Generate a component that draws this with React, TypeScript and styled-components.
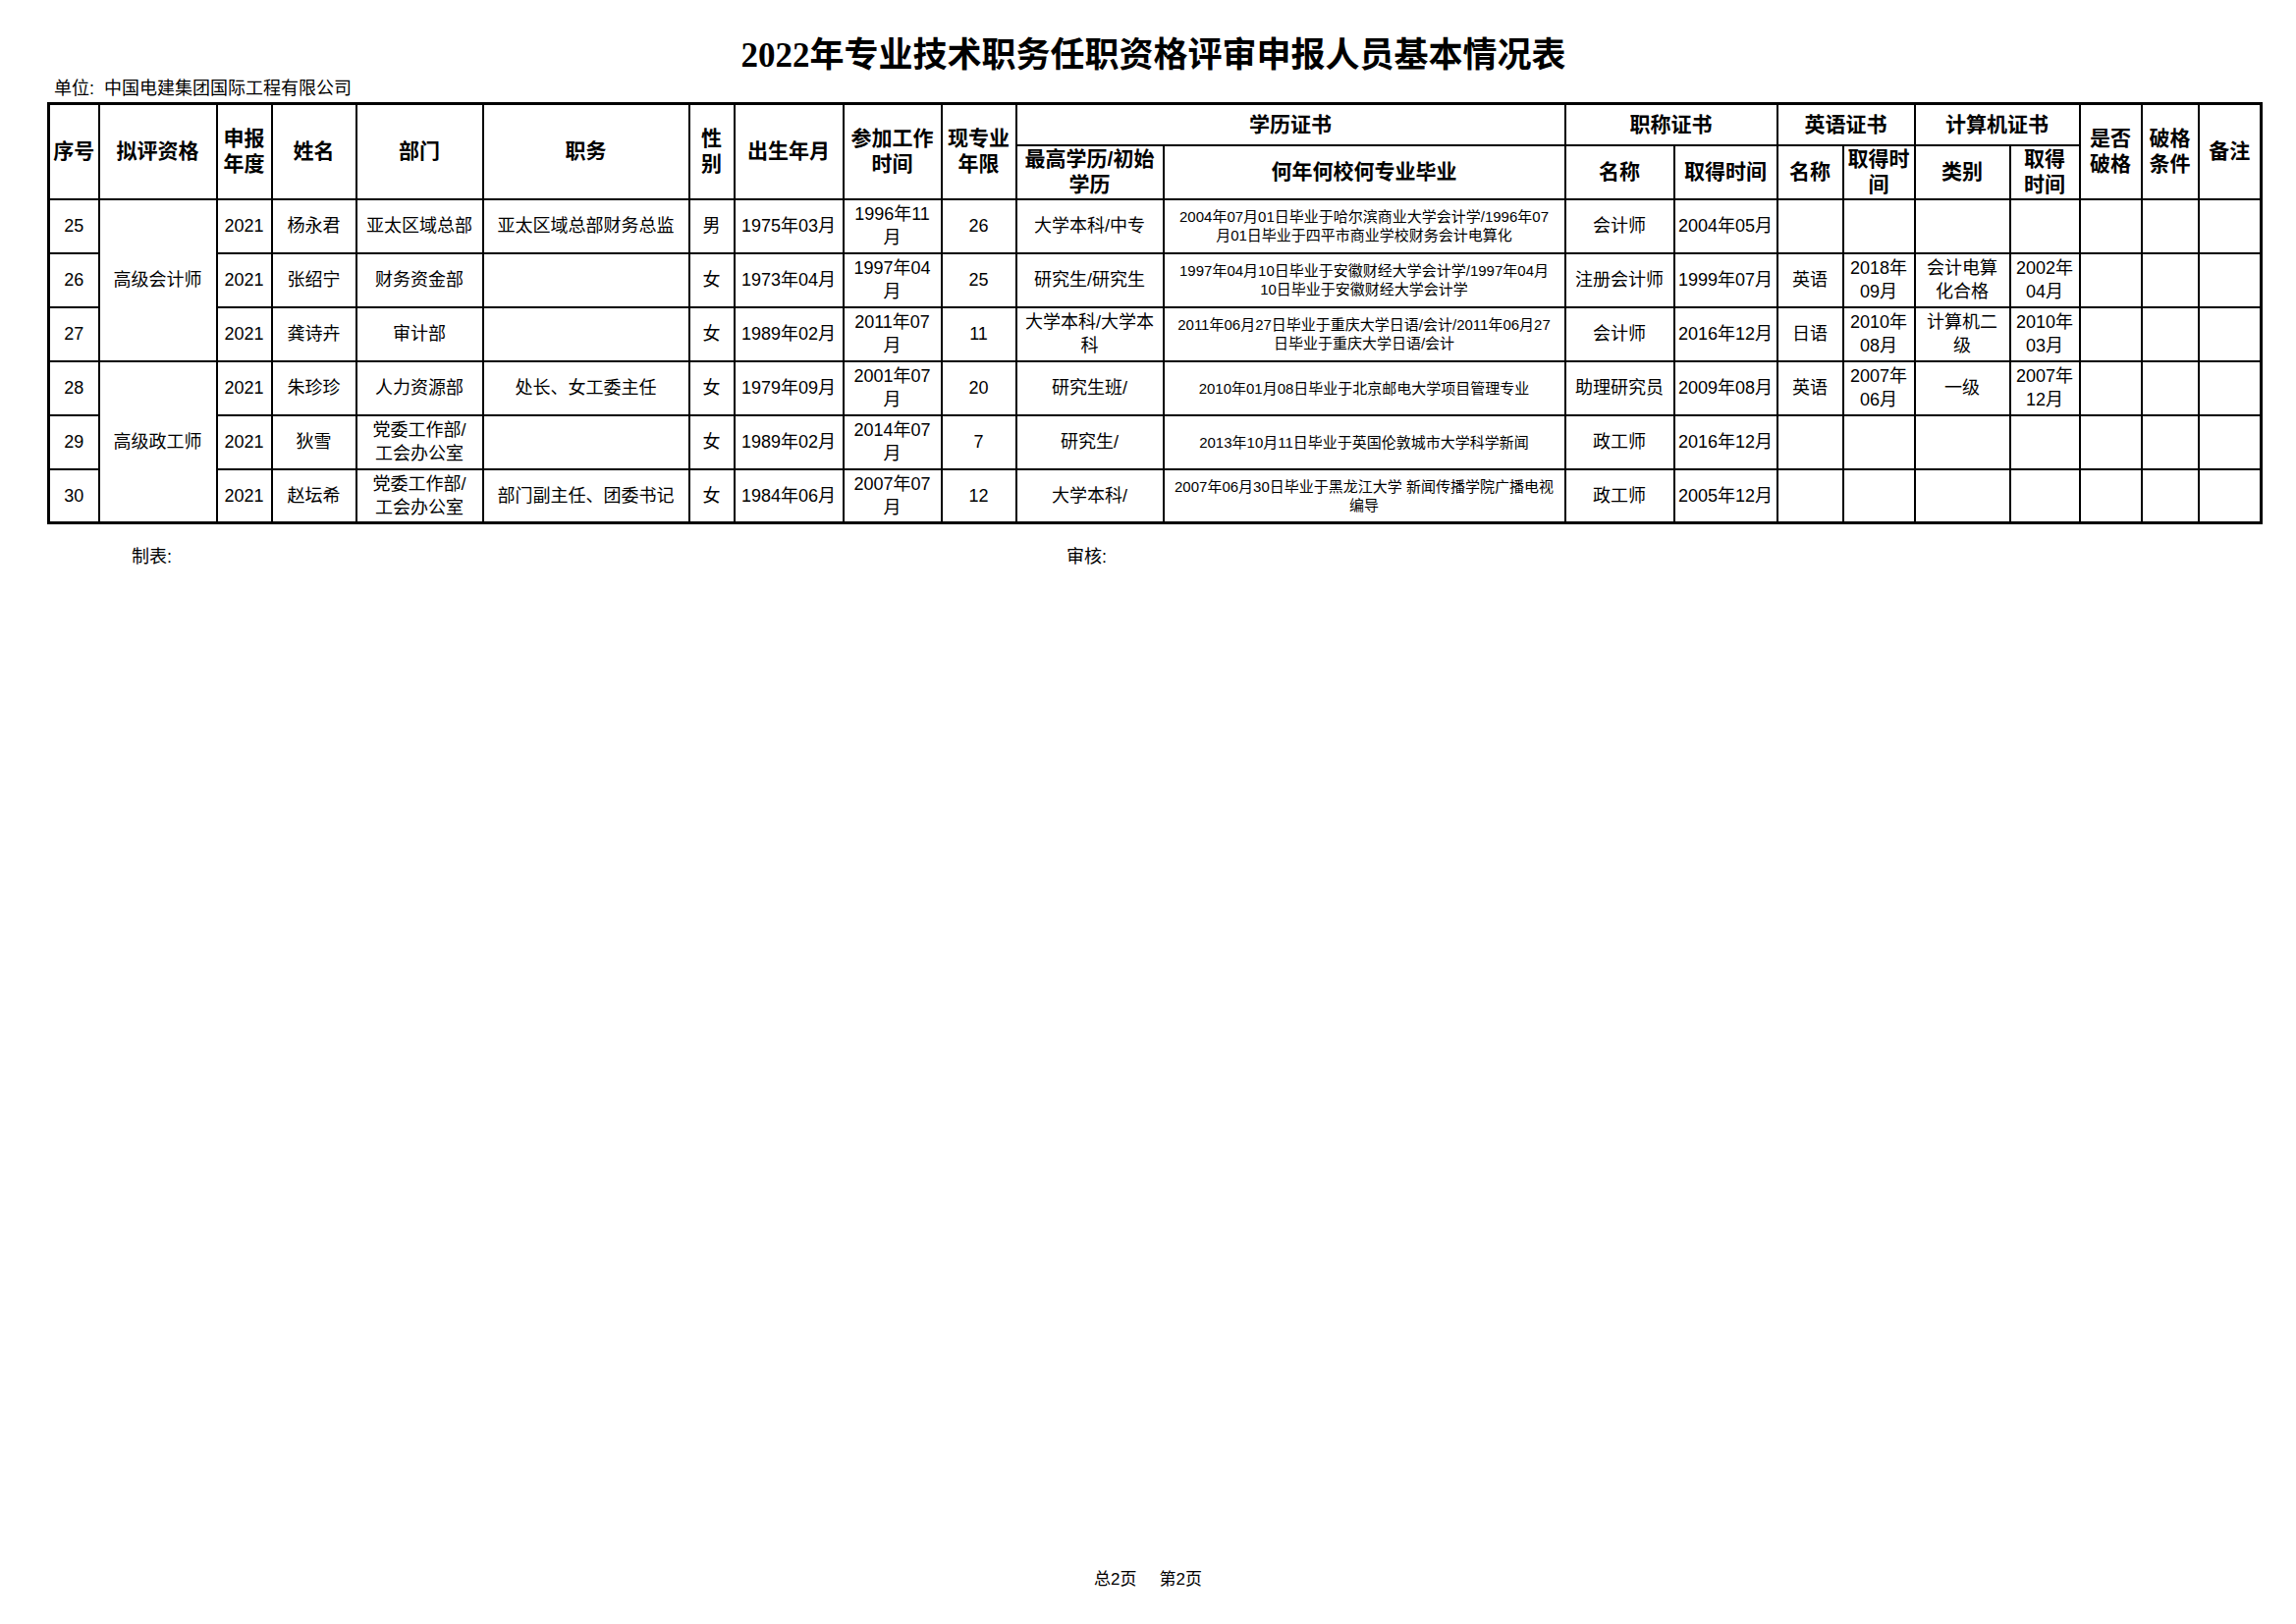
import React from 'react';
import styled, { createGlobalStyle } from 'styled-components';

const GlobalStyle = createGlobalStyle`
  body {
    margin: 0;
    background: #fff;
    color: #000;
    font-family: "Liberation Sans", "Noto Sans CJK SC", sans-serif;
  }
`;

// whole sheet, one printed page
const Page = styled.div`
  width: 2338px;
  height: 1654px;
  box-sizing: border-box;
  display: flex;
  flex-direction: column;
  padding: 37px 0 35px 0;
`;

const Sheet = styled.div`
  width: 2253px;
  margin-left: 48px;
`;

const Title = styled.h1`
  margin: 0;
  text-align: center;
  font-family: "Liberation Serif", "Noto Sans CJK SC", serif;
  font-size: 35px;
  line-height: 40px;
  font-weight: bold;
`;

const Unit = styled.div`
  margin: 3px 0 0 7px;
  font-size: 18px;
  line-height: 20px;
  white-space: pre;
`;

const Table = styled.table`
  margin-top: 4px;
  width: 2253px;
  table-layout: fixed;
  border-collapse: collapse;
  border: 3px solid #000;
`;

const Col = styled.col<{ $w: number }>`
  width: ${p => p.$w}px;
`;

const HeadRow = styled.tr<{ $h: number }>`
  height: ${p => p.$h}px;
`;

const Row = styled.tr`
  height: 55px;
`;

const HeadCell = styled.th`
  border: 2px solid #000;
  padding: 0 2px;
  font-size: 21px;
  line-height: 26px;
  font-weight: bold;
  text-align: center;
  vertical-align: middle;
  white-space: pre-line;
`;

const Cell = styled.td<{ $small?: boolean }>`
  border: 2px solid #000;
  padding: 0 2px;
  font-size: ${p => (p.$small ? 15 : 18)}px;
  line-height: ${p => (p.$small ? 19 : 24)}px;
  text-align: center;
  vertical-align: middle;
  white-space: pre-line;
`;

const SignRow = styled.div`
  display: grid;
  grid-template-columns: 952px auto;
  margin: 23px 0 0 86px;
  font-size: 18px;
  line-height: 20px;
`;

const PageNo = styled.div`
  margin-top: auto;
  display: flex;
  justify-content: center;
  gap: 23px;
  font-size: 17px;
  line-height: 20px;
`;

const widths = [51, 120, 56, 86, 129, 210, 46, 111, 100, 76, 150, 409, 111, 105, 67, 73, 97, 71, 63, 58, 64];

type Person = {
  no: string;
  grade?: { text: string; span: number };
  year: string;
  name: string;
  dept: string;
  post: string;
  sex: string;
  born: string;
  work: string;
  years: string;
  edu: string;
  school: string;
  title: string;
  titleDate: string;
  lang: string;
  langDate: string;
  comp: string;
  compDate: string;
};

const people: Person[] = [
  {
    no: '25', grade: { text: '高级会计师', span: 3 }, year: '2021', name: '杨永君', dept: '亚太区域总部',
    post: '亚太区域总部财务总监', sex: '男', born: '1975年03月', work: '1996年11\n月', years: '26',
    edu: '大学本科/中专',
    school: '2004年07月01日毕业于哈尔滨商业大学会计学/1996年07\n月01日毕业于四平市商业学校财务会计电算化',
    title: '会计师', titleDate: '2004年05月', lang: '', langDate: '', comp: '', compDate: '',
  },
  {
    no: '26', year: '2021', name: '张绍宁', dept: '财务资金部', post: '', sex: '女', born: '1973年04月',
    work: '1997年04\n月', years: '25', edu: '研究生/研究生',
    school: '1997年04月10日毕业于安徽财经大学会计学/1997年04月\n10日毕业于安徽财经大学会计学',
    title: '注册会计师', titleDate: '1999年07月', lang: '英语', langDate: '2018年\n09月',
    comp: '会计电算\n化合格', compDate: '2002年\n04月',
  },
  {
    no: '27', year: '2021', name: '龚诗卉', dept: '审计部', post: '', sex: '女', born: '1989年02月',
    work: '2011年07\n月', years: '11', edu: '大学本科/大学本\n科',
    school: '2011年06月27日毕业于重庆大学日语/会计/2011年06月27\n日毕业于重庆大学日语/会计',
    title: '会计师', titleDate: '2016年12月', lang: '日语', langDate: '2010年\n08月',
    comp: '计算机二\n级', compDate: '2010年\n03月',
  },
  {
    no: '28', grade: { text: '高级政工师', span: 3 }, year: '2021', name: '朱珍珍', dept: '人力资源部',
    post: '处长、女工委主任', sex: '女', born: '1979年09月', work: '2001年07\n月', years: '20',
    edu: '研究生班/', school: '2010年01月08日毕业于北京邮电大学项目管理专业',
    title: '助理研究员', titleDate: '2009年08月', lang: '英语', langDate: '2007年\n06月',
    comp: '一级', compDate: '2007年\n12月',
  },
  {
    no: '29', year: '2021', name: '狄雪', dept: '党委工作部/\n工会办公室', post: '', sex: '女',
    born: '1989年02月', work: '2014年07\n月', years: '7', edu: '研究生/',
    school: '2013年10月11日毕业于英国伦敦城市大学科学新闻',
    title: '政工师', titleDate: '2016年12月', lang: '', langDate: '', comp: '', compDate: '',
  },
  {
    no: '30', year: '2021', name: '赵坛希', dept: '党委工作部/\n工会办公室', post: '部门副主任、团委书记',
    sex: '女', born: '1984年06月', work: '2007年07\n月', years: '12', edu: '大学本科/',
    school: '2007年06月30日毕业于黑龙江大学 新闻传播学院广播电视\n编导',
    title: '政工师', titleDate: '2005年12月', lang: '', langDate: '', comp: '', compDate: '',
  },
];

const App: React.FC = () => (
  <>
    <GlobalStyle />
    <Page>
      <Sheet>
        <Title>2022年专业技术职务任职资格评审申报人员基本情况表</Title>
        <Unit>{'单位:  中国电建集团国际工程有限公司'}</Unit>
        <Table>
          <colgroup>
            {widths.map((w, i) => <Col key={i} $w={w} />)}
          </colgroup>
          <thead>
            <HeadRow $h={42}>
              <HeadCell rowSpan={2}>序号</HeadCell>
              <HeadCell rowSpan={2}>拟评资格</HeadCell>
              <HeadCell rowSpan={2}>{'申报\n年度'}</HeadCell>
              <HeadCell rowSpan={2}>姓名</HeadCell>
              <HeadCell rowSpan={2}>部门</HeadCell>
              <HeadCell rowSpan={2}>职务</HeadCell>
              <HeadCell rowSpan={2}>{'性\n别'}</HeadCell>
              <HeadCell rowSpan={2}>出生年月</HeadCell>
              <HeadCell rowSpan={2}>{'参加工作\n时间'}</HeadCell>
              <HeadCell rowSpan={2}>{'现专业\n年限'}</HeadCell>
              <HeadCell colSpan={2}>学历证书</HeadCell>
              <HeadCell colSpan={2}>职称证书</HeadCell>
              <HeadCell colSpan={2}>英语证书</HeadCell>
              <HeadCell colSpan={2}>计算机证书</HeadCell>
              <HeadCell rowSpan={2}>{'是否\n破格'}</HeadCell>
              <HeadCell rowSpan={2}>{'破格\n条件'}</HeadCell>
              <HeadCell rowSpan={2}>备注</HeadCell>
            </HeadRow>
            <HeadRow $h={55}>
              <HeadCell>{'最高学历/初始\n学历'}</HeadCell>
              <HeadCell>何年何校何专业毕业</HeadCell>
              <HeadCell>名称</HeadCell>
              <HeadCell>取得时间</HeadCell>
              <HeadCell>名称</HeadCell>
              <HeadCell>{'取得时\n间'}</HeadCell>
              <HeadCell>类别</HeadCell>
              <HeadCell>{'取得\n时间'}</HeadCell>
            </HeadRow>
          </thead>
          <tbody>
            {people.map(p => (
              <Row key={p.no}>
                <Cell>{p.no}</Cell>
                {p.grade && <Cell rowSpan={p.grade.span}>{p.grade.text}</Cell>}
                <Cell>{p.year}</Cell>
                <Cell>{p.name}</Cell>
                <Cell>{p.dept}</Cell>
                <Cell>{p.post}</Cell>
                <Cell>{p.sex}</Cell>
                <Cell>{p.born}</Cell>
                <Cell>{p.work}</Cell>
                <Cell>{p.years}</Cell>
                <Cell>{p.edu}</Cell>
                <Cell $small>{p.school}</Cell>
                <Cell>{p.title}</Cell>
                <Cell>{p.titleDate}</Cell>
                <Cell>{p.lang}</Cell>
                <Cell>{p.langDate}</Cell>
                <Cell>{p.comp}</Cell>
                <Cell>{p.compDate}</Cell>
                <Cell />
                <Cell />
                <Cell />
              </Row>
            ))}
          </tbody>
        </Table>
        <SignRow>
          <span>制表:</span>
          <span>审核:</span>
        </SignRow>
      </Sheet>
      <PageNo>
        <span>总2页</span>
        <span>第2页</span>
      </PageNo>
    </Page>
  </>
);

export default App;
